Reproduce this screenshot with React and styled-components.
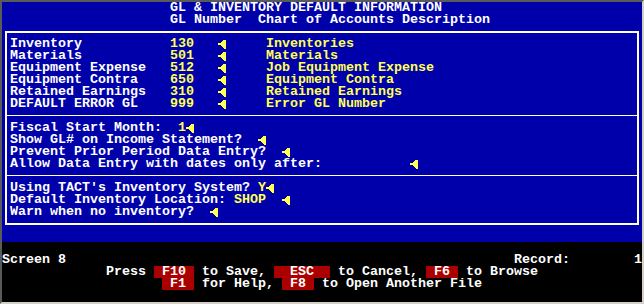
import React from 'react';
import styled, { createGlobalStyle } from 'styled-components';

const CELL = 8;

const GlobalStyle = createGlobalStyle`
  html, body {
    margin: 0;
    padding: 0;
    background: #000;
  }
`;

const Frame = styled.div`
  width: 640px;
  height: 300px;
  border-style: solid;
  border-width: 2px;
  border-color: #5a5a5a #d4d0c8 #d4d0c8 #5a5a5a;
  background: #000;
  font-family: "Liberation Mono", "DejaVu Sans Mono", monospace;
  font-weight: bold;
  font-size: 13.333px;
  color: #fff;
  overflow: hidden;
`;

const BluePanel = styled.div`
  background: #0000aa;
  height: 240px;
  box-sizing: border-box;
`;

const BlackPanel = styled.div`
  background: #000;
  padding-top: 12px;
`;

const Row = styled.div`
  display: flex;
  height: 12px;
  line-height: 12px;
  white-space: pre;
  padding-left: ${(p) => (p.$indent || 0) * CELL}px;
`;

const Cell = styled.span`
  flex: none;
  width: ${(p) => p.$cols * CELL}px;
  color: ${(p) => (p.$yellow ? '#ffff55' : '#ffffff')};
`;

const Text = styled.span`
  color: ${(p) => (p.$yellow ? '#ffff55' : '#ffffff')};
`;

const Box = styled.div`
  margin: 5px 3px 0 3px;
  border: 2px solid #ffffff;
`;

const Section = styled.div`
  padding: ${(p) => (p.$first ? '5px' : '6px')} 0 5px 3px;
  border-top: ${(p) => (p.$first ? 'none' : '1px solid #ffffff')};
`;

const KeyCap = styled.span`
  background: #aa0000;
  color: #ffffff;
`;

const ArrowSvg = styled.svg`
  display: block;
  flex: none;
  width: 8px;
  height: 12px;
`;

function Arrow() {
  return (
    <ArrowSvg viewBox="0 0 8 12" shapeRendering="crispEdges">
      <rect x="0" y="5" width="2" height="2" fill="#ffff55" />
      <polygon points="1.5,6 6,1.5 7.5,1.5 7.5,10.5 6,10.5" fill="#ffff55" />
    </ArrowSvg>
  );
}

const accounts = [
  { label: 'Inventory', gl: '130', desc: 'Inventories' },
  { label: 'Materials', gl: '501', desc: 'Materials' },
  { label: 'Equipment Expense', gl: '512', desc: 'Job Equipment Expense' },
  { label: 'Equipment Contra', gl: '650', desc: 'Equipment Contra' },
  { label: 'Retained Earnings', gl: '310', desc: 'Retained Earnings' },
  { label: 'DEFAULT ERROR GL', gl: '999', desc: 'Error GL Number' },
];

const periodSettings = [
  { label: 'Fiscal Start Month:', labelCols: 21, value: '1', valueCols: 1 },
  { label: 'Show GL# on Income Statement?', labelCols: 29, value: '', valueCols: 2 },
  { label: 'Prevent Prior Period Data Entry?', labelCols: 32, value: '', valueCols: 2 },
  { label: 'Allow Data Entry with dates only after:', labelCols: 39, value: '', valueCols: 11 },
];

const inventorySettings = [
  { label: "Using TACT's Inventory System?", labelCols: 31, value: 'Y', valueCols: 1 },
  { label: 'Default Inventory Location:', labelCols: 28, value: 'SHOP', valueCols: 6 },
  { label: 'Warn when no inventory?', labelCols: 23, value: '', valueCols: 2 },
];

function SettingRow({ s }) {
  return (
    <Row>
      <Cell $cols={s.labelCols}>{s.label}</Cell>
      <Cell $cols={s.valueCols} $yellow>{s.value}</Cell>
      <Arrow />
    </Row>
  );
}

export default function App() {
  return (
    <>
      <GlobalStyle />
      <Frame>
        <BluePanel>
          <Row $indent={21}>
            <Text>GL &amp; INVENTORY DEFAULT INFORMATION</Text>
          </Row>
          <Row $indent={21}>
            <Text>GL Number  Chart of Accounts Description</Text>
          </Row>
          <Box>
            <Section $first>
              {accounts.map((a) => (
                <Row key={a.label}>
                  <Cell $cols={20}>{a.label}</Cell>
                  <Cell $cols={6} $yellow>{a.gl}</Cell>
                  <Cell $cols={6}><Arrow /></Cell>
                  <Text $yellow>{a.desc}</Text>
                </Row>
              ))}
            </Section>
            <Section>
              {periodSettings.map((s) => (
                <SettingRow key={s.label} s={s} />
              ))}
            </Section>
            <Section>
              {inventorySettings.map((s) => (
                <SettingRow key={s.label} s={s} />
              ))}
            </Section>
          </Box>
        </BluePanel>
        <BlackPanel>
          <Row>
            <Cell $cols={64}>Screen 8</Cell>
            <Cell $cols={15}>Record:</Cell>
            <Text>1</Text>
          </Row>
          <Row $indent={13}>
            <Text>Press </Text>
            <KeyCap> F10 </KeyCap>
            <Text> to Save, </Text>
            <KeyCap>  ESC  </KeyCap>
            <Text> to Cancel, </Text>
            <KeyCap> F6 </KeyCap>
            <Text> to Browse</Text>
          </Row>
          <Row $indent={20}>
            <KeyCap> F1 </KeyCap>
            <Text> for Help, </Text>
            <KeyCap> F8 </KeyCap>
            <Text> to Open Another File</Text>
          </Row>
        </BlackPanel>
      </Frame>
    </>
  );
}
